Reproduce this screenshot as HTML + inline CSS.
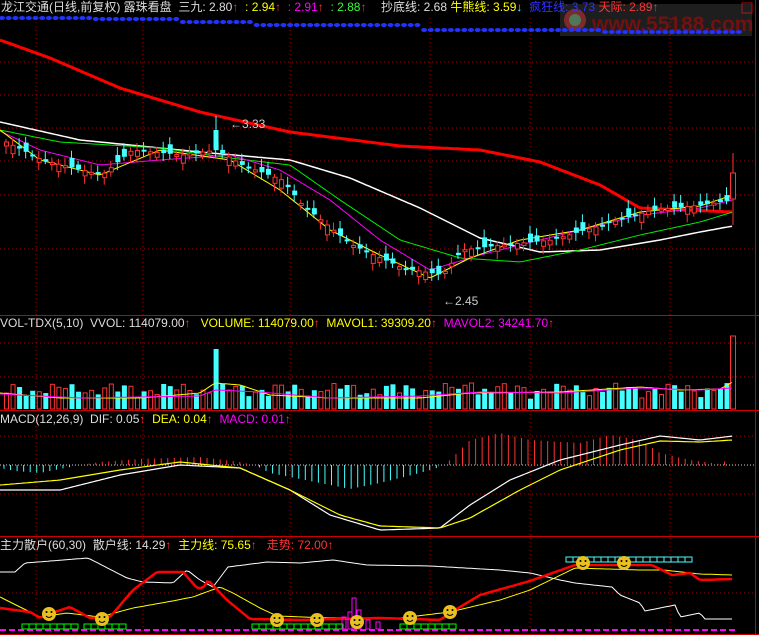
<!DOCTYPE html>
<html><head><meta charset="utf-8"><style>
html,body{margin:0;padding:0;background:#000;width:759px;height:635px;overflow:hidden}
.t{position:absolute;font-family:"Liberation Sans","Noto Sans CJK SC",sans-serif;font-size:12px;white-space:nowrap;line-height:14px}
</style></head><body>
<svg id="s" width="759" height="635" style="position:absolute;left:0;top:0" xmlns="http://www.w3.org/2000/svg">
<g stroke="#a00" stroke-dasharray="1,3" stroke-width="1">
<line x1="0" y1="62" x2="755" y2="62"/><line x1="0" y1="95" x2="755" y2="95"/><line x1="0" y1="128" x2="755" y2="128"/><line x1="0" y1="161" x2="755" y2="161"/><line x1="0" y1="195" x2="755" y2="195"/><line x1="0" y1="249" x2="755" y2="249"/>
<line x1="0" y1="343" x2="755" y2="343"/><line x1="0" y1="377" x2="755" y2="377"/>
<line x1="0" y1="436" x2="755" y2="436"/><line x1="0" y1="494" x2="755" y2="494"/>
<line x1="0" y1="593" x2="755" y2="593"/>
<line x1="36" y1="18" x2="36" y2="635"/><line x1="143" y1="18" x2="143" y2="635"/><line x1="290" y1="18" x2="290" y2="635"/><line x1="430" y1="18" x2="430" y2="635"/><line x1="530" y1="18" x2="530" y2="635"/><line x1="670" y1="18" x2="670" y2="635"/>
</g>
<line x1="0" y1="465" x2="755" y2="465" stroke="#ccc" stroke-dasharray="1,2"/>
<g stroke="#c00" stroke-width="1">
<line x1="0" y1="315.5" x2="759" y2="315.5"/><line x1="0" y1="410.5" x2="759" y2="410.5"/><line x1="0" y1="536.5" x2="759" y2="536.5"/><line x1="0" y1="634.5" x2="759" y2="634.5"/>
<line x1="755.5" y1="0" x2="755.5" y2="635"/>
</g>
<rect x="742" y="3" width="10" height="10" fill="none" stroke="#c00"/>
<rect x="560" y="4" width="192" height="32" fill="#555" opacity="0.35"/>
<circle cx="575" cy="20" r="11" fill="#b33" opacity="0.6"/><circle cx="575" cy="20" r="6" fill="#3a7" opacity="0.6"/>
<text x="592" y="31" font-family="Liberation Sans" font-weight="bold" font-size="21" fill="#7a1010" opacity="0.9">www.55188.com</text>
<g id="g"></g>
</svg>
<div class="t" style="left:1px;top:0;color:#ddd">龙江交通(日线,前复权) 露珠看盘 &nbsp;三九: 2.80<span style="color:#f33">↑</span> <span style="color:#ff0">&nbsp;: 2.94</span><span style="color:#f33">↑</span> <span style="color:#f0f">&nbsp;: 2.91</span><span style="color:#f33">↑</span> <span style="color:#3f3">&nbsp;: 2.88</span><span style="color:#f33">↑</span></div>
<div class="t" style="left:381px;top:0;color:#ddd">抄底线: 2.68 <span style="color:#ff0">牛熊线: 3.59</span><span style="color:#3ff">↓</span> &nbsp;<span style="color:#33f">疯狂线: 3.73</span> <span style="color:#f33">天际: 2.89↑</span></div>
<div class="t" style="left:0;top:316px;color:#ddd">VOL-TDX(5,10) &nbsp;VVOL: 114079.00<span style="color:#f33">↑</span> &nbsp;&nbsp;<span style="color:#ff0">VOLUME: 114079.00</span><span style="color:#f33">↑</span> &nbsp;<span style="color:#ff0">MAVOL1: 39309.20</span><span style="color:#f33">↑</span> &nbsp;<span style="color:#f0f">MAVOL2: 34241.70</span><span style="color:#f33">↑</span></div>
<div class="t" style="left:0;top:412px;color:#ddd">MACD(12,26,9) &nbsp;DIF: 0.05<span style="color:#f33">↑</span> &nbsp;<span style="color:#ff0">DEA: 0.04</span><span style="color:#f33">↑</span> &nbsp;<span style="color:#f0f">MACD: 0.01</span><span style="color:#f33">↑</span></div>
<div class="t" style="left:0;top:538px;color:#ddd">主力散户(60,30) &nbsp;散户线: 14.29<span style="color:#f33">↑</span> &nbsp;<span style="color:#ff0">主力线: 75.65</span><span style="color:#f33">↑</span> &nbsp;&nbsp;<span style="color:#f33">走势: 72.00↑</span></div>
<div class="t" style="left:230px;top:117px;color:#ccc">←3.33</div>
<div class="t" style="left:443px;top:294px;color:#ccc">←2.45</div>
<script>
var g=document.getElementById('g'),h='';
function interp(k,x){for(var i=0;i<k.length-1;i++){if(x>=k[i][0]&&x<=k[i+1][0]){var t=(x-k[i][0])/(k[i+1][0]-k[i][0]);return k[i][1]+t*(k[i+1][1]-k[i][1]);}}return k[k.length-1][1];}
function pl(k,c,w,x0,x1){var p=[];for(var x=x0;x<=x1;x+=3)p.push(x+','+interp(k,x).toFixed(1));return '<polyline points="'+p.join(' ')+'" fill="none" stroke="'+c+'" stroke-width="'+w+'"/>';}
for(var x=2;x<745;x+=6.7){var y=x<95?18:(x<180?19:(x<250?22:(x<420?25:(x<600?30:32))));h+='<ellipse cx="'+x+'" cy="'+y+'" rx="3" ry="2" fill="#23f"/>';}
h+=pl([[0,40],[50,58],[120,88],[200,112],[290,132],[400,146],[480,150],[540,162],[600,185],[640,208],[733,212]],'#f00',3,0,733);
h+=pl([[0,122],[80,140],[200,152],[290,160],[350,178],[420,208],[480,238],[540,252],[600,250],[660,240],[700,232],[733,226]],'#fff',1.5,0,733);
h+=pl([[0,130],[60,142],[160,148],[230,158],[290,165],[340,200],[400,240],[460,258],[520,262],[580,250],[640,235],[700,222],[733,212]],'#0e0',1,0,733);
h+=pl([[0,131],[40,150],[100,165],[160,160],[230,155],[280,170],[330,200],[380,240],[430,270],[480,255],[520,245],[580,230],[640,215],[700,208],[733,200]],'#f0f',1,0,733);
h+=pl([[0,130],[40,160],[100,175],[160,150],[230,160],[280,190],[330,230],[380,255],[430,278],[470,258],[520,240],[580,230],[640,212],[700,206],[733,195]],'#ff0',1,0,733);
var K=[[0,140],[40,160],[100,175],[130,150],[180,155],[215,150],[240,165],[280,180],[300,205],[350,245],[400,268],[440,275],[460,250],[500,245],[550,240],[600,225],[650,210],[700,205],[730,200]];
var vols='';
for(var i=0;i<111;i++){var x=4+i*6.55;var c=interp(K,x);var r=Math.sin(i*1.7)*6+Math.cos(i*0.9)*4;var o=c+r;var hi=Math.min(o,c)-3-Math.abs(Math.sin(i*2.3))*5,lo=Math.max(o,c)+3+Math.abs(Math.cos(i*1.3))*5;
var up=o>c;var col=up?'#f33':'#4ff';
h+='<line x1="'+(x+2)+'" y1="'+hi+'" x2="'+(x+2)+'" y2="'+lo+'" stroke="'+col+'"/>';
var tp=Math.min(o,c),bh=Math.max(2,Math.abs(o-c));
h+=up?'<rect x="'+(x+0.5)+'" y="'+tp+'" width="4" height="'+bh+'" fill="#000" stroke="#f33"/>':'<rect x="'+x+'" y="'+tp+'" width="5" height="'+bh+'" fill="#4ff"/>';
var v=8+Math.abs(Math.sin(i*1.1))*10+Math.abs(Math.cos(i*0.37))*8;if(x>210&&x<220)v=60;if(x>340&&x<350)v=24;if(x>465&&x<475)v=26;if(x>155&&x<162)v=25;
vols+=up?'<rect x="'+(x+0.5)+'" y="'+(409-v)+'" width="4" height="'+v+'" fill="none" stroke="#f33"/>':'<rect x="'+x+'" y="'+(409-v)+'" width="5" height="'+v+'" fill="#4ff"/>';
}
h+='<line x1="733" y1="153" x2="733" y2="225" stroke="#f33"/><rect x="730.5" y="173" width="5" height="26" fill="#000" stroke="#f33"/>';
h+='<line x1="216" y1="116" x2="216" y2="150" stroke="#4ff"/><rect x="213.5" y="130" width="5" height="18" fill="#4ff"/>';
h+=vols+'<rect x="730.5" y="336" width="5" height="73" fill="none" stroke="#f33"/>';
h+=pl([[0,393],[60,398],[140,398],[200,393],[215,383],[240,385],[270,395],[330,398],[420,398],[470,393],[560,392],[640,387],[680,390],[720,389],[733,382]],'#ff0',1,0,733);
h+=pl([[0,394],[80,398],[200,396],[215,390],[260,392],[330,398],[420,396],[480,392],[560,393],[640,388],[700,390],[733,388]],'#f0f',1,0,733);
for(var i=0;i<111;i++){var x=4+i*6.55;var m=interp([[0,-3],[15,-6],[40,-8],[60,-4],[80,0],[100,3],[140,6],[200,8],[240,3],[255,0],[270,-8],[320,-18],[350,-24],[380,-18],[420,-8],[440,-2],[450,5],[470,25],[500,32],[530,25],[580,22],[610,30],[640,25],[660,12],[690,5],[720,1],[733,8]],x);
if(Math.abs(m)<1)continue;
h+='<line x1="'+x+'" y1="465" x2="'+x+'" y2="'+(465-m)+'" stroke="'+(m>0?'#f33':'#4ff')+'"/>';}
h+=pl([[0,490],[60,490],[120,475],[180,465],[240,468],[290,490],[330,515],[380,530],[440,528],[470,505],[510,480],[560,460],[620,445],[660,436],[700,440],[733,436]],'#fff',1.2,0,733);
h+=pl([[0,485],[60,480],[120,470],[180,462],[240,468],[290,490],[340,515],[380,526],[440,528],[470,518],[520,490],[560,470],[620,450],[660,441],[700,442],[733,440]],'#ff0',1.2,0,733);
h+=pl([[0,572],[15,572],[25,563],[88,558],[127,578],[143,582],[173,583],[187,570],[200,580],[213,587],[228,567],[267,562],[300,563],[333,560],[367,565],[430,566],[500,570],[530,573],[560,580],[575,583],[612,587],[620,595],[640,603],[645,611],[660,608],[675,605],[680,617],[700,613],[705,619],[733,619]],'#fff',1,0,733);
h+=pl([[0,597],[40,617],[67,613],[100,617],[133,608],[167,602],[193,597],[220,587],[233,593],[260,608],[277,616],[330,618],[400,618],[450,612],[500,600],[530,590],[575,568],[640,570],[663,570],[700,574],[733,575]],'#ff0',1,0,733);
h+=pl([[0,608],[30,612],[40,618],[55,612],[70,607],[90,618],[110,617],[133,590],[157,572],[183,572],[197,588],[203,588],[208,580],[227,600],[250,619],[300,620],[380,618],[440,620],[455,610],[480,595],[530,581],[575,565],[652,565],[672,575],[690,573],[700,580],[733,579]],'#f00',2.5,0,733);
h+='<line x1="0" y1="630" x2="735" y2="630" stroke="#f0f" stroke-width="2" stroke-dasharray="6,3"/>';
function boxes(x0,n,y,c){var s='';for(var j=0;j<n;j++)s+='<rect x="'+(x0+j*7)+'" y="'+y+'" width="7" height="5" fill="none" stroke="'+c+'"/>';return s;}
h+=boxes(22,8,624,'#0f0')+boxes(84,6,624,'#0f0')+boxes(252,13,624,'#0f0')+boxes(400,8,624,'#0f0')+boxes(566,18,557,'#4ff');
[[342,617,4,12],[348,612,4,17],[352,598,4,31],[357,610,4,19],[366,620,4,9],[376,622,4,7]].forEach(function(b){h+='<rect x="'+b[0]+'" y="'+b[1]+'" width="'+b[2]+'" height="'+b[3]+'" fill="none" stroke="#f0f"/>';});
[[49,614],[102,619],[277,620],[317,620],[357,622],[410,618],[450,612],[583,563],[624,563]].forEach(function(p){h+='<circle cx="'+p[0]+'" cy="'+p[1]+'" r="7" fill="#e8c020"/><circle cx="'+(p[0]-2.5)+'" cy="'+(p[1]-2)+'" r="1" fill="#000"/><circle cx="'+(p[0]+2.5)+'" cy="'+(p[1]-2)+'" r="1" fill="#000"/><path d="M'+(p[0]-3)+' '+(p[1]+2)+' Q'+p[0]+' '+(p[1]+5)+' '+(p[0]+3)+' '+(p[1]+2)+'" stroke="#000" fill="none"/>';});
g.innerHTML=h;
</script>
</body></html>
